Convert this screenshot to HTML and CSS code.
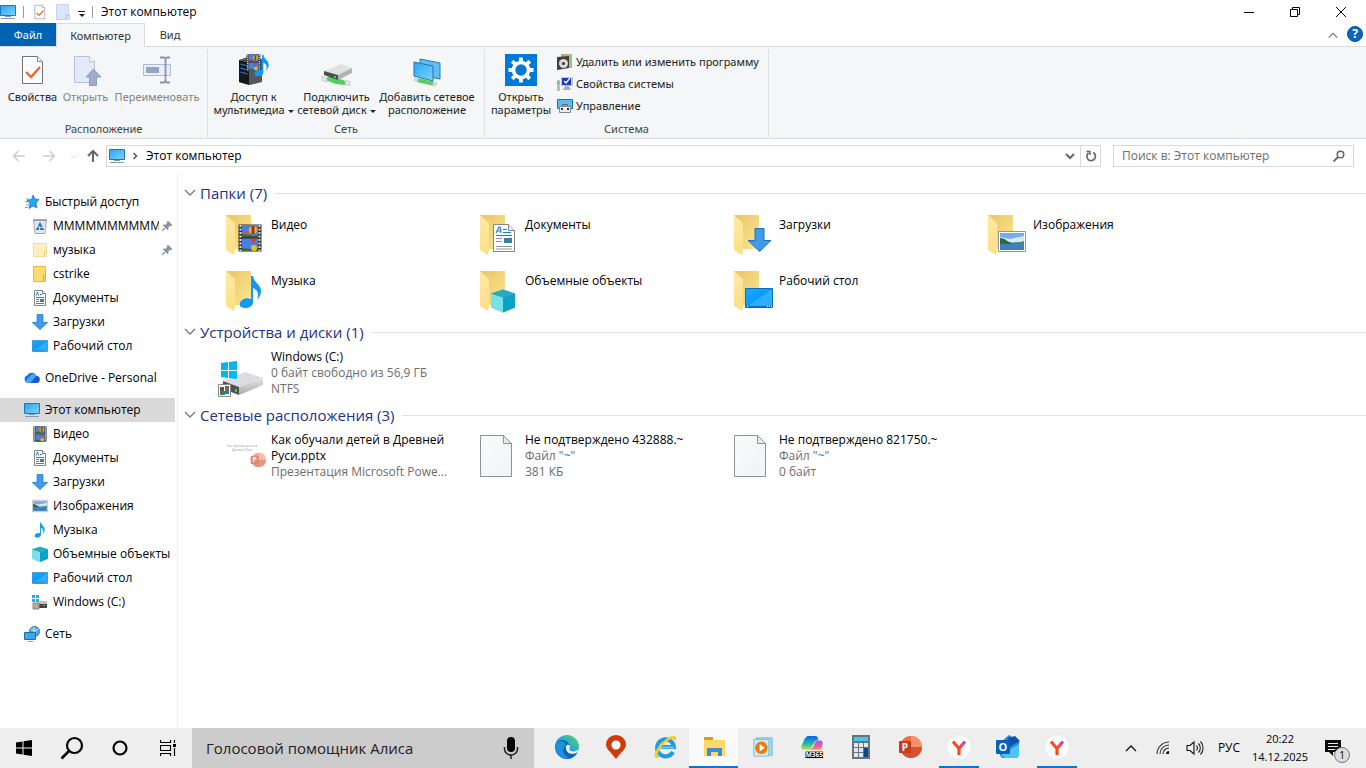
FILE: index.html
```html
<!DOCTYPE html>
<html lang="ru">
<head>
<meta charset="utf-8">
<title>Этот компьютер</title>
<link rel="stylesheet" href="styles.css">
</head>
<body>
<svg class="sprite" aria-hidden="true">
  <defs>
    <linearGradient id="gBlue" x1="0" y1="0" x2="1" y2="1"><stop offset="0" stop-color="#2aa4f4"/><stop offset="1" stop-color="#7fd4ff"/></linearGradient>
    <linearGradient id="gDesk" x1="0" y1="0" x2="1" y2="1"><stop offset="0" stop-color="#1ea7ff"/><stop offset=".5" stop-color="#0a9bfd"/><stop offset=".52" stop-color="#2bb0ff"/><stop offset="1" stop-color="#2baaf8"/></linearGradient>
    <linearGradient id="gFold" x1="0" y1="0" x2="1" y2="1"><stop offset="0" stop-color="#e9c565"/><stop offset="1" stop-color="#ffe591"/></linearGradient>
    <linearGradient id="gFront" x1="0" y1="0" x2="0" y2="1"><stop offset="0" stop-color="#ffe9a6"/><stop offset="1" stop-color="#ffdf85"/></linearGradient>
    <linearGradient id="gPaper" x1="0" y1="0" x2="1" y2="1"><stop offset="0" stop-color="#fafbfb"/><stop offset="1" stop-color="#f1f3f4"/></linearGradient>
    <linearGradient id="gDisk" x1="0" y1="0" x2="0" y2="1"><stop offset="0" stop-color="#e4e4e6"/><stop offset="1" stop-color="#a9aaad"/></linearGradient>
    <linearGradient id="gEdge" x1="0" y1="1" x2="1" y2="0"><stop offset="0" stop-color="#0c59a4"/><stop offset=".5" stop-color="#1fa5dc"/><stop offset="1" stop-color="#5fd85c"/></linearGradient>
    <linearGradient id="gY" x1="0" y1="1" x2="1" y2="0"><stop offset="0" stop-color="#ff3a1a"/><stop offset=".6" stop-color="#ff4a2a"/><stop offset="1" stop-color="#c53cf0"/></linearGradient>
    <linearGradient id="gM1" x1="0" y1="0" x2="0" y2="1"><stop offset="0" stop-color="#0a62e8"/><stop offset=".6" stop-color="#23c0a5"/><stop offset="1" stop-color="#d8e03a"/></linearGradient>
    <linearGradient id="gM2" x1="0" y1="0" x2="0" y2="1"><stop offset="0" stop-color="#a05cf5"/><stop offset=".6" stop-color="#f05a9a"/><stop offset="1" stop-color="#ff9a55"/></linearGradient>

    <symbol id="pc" viewBox="0 0 16 16"><path d="M.5 1.500h15v10h-15z" fill="url(#gBlue)" stroke="#1f78b4"/><path d="M1 14.500h14M5 12.500h6" stroke="#7d9bb3" fill="none"/></symbol>
    <symbol id="check" viewBox="0 0 26 32"><path d="M2.500 2.500h15l5 5v22h-20z" fill="#fcfcfc" stroke="#747474"/><path d="M17.500 2.500v5h5" fill="#eee" stroke="#8b8b8b"/><path d="M6 18l5 5 9-10" fill="none" stroke="#f26522" stroke-width="2.400"/></symbol>
    <symbol id="newdoc" viewBox="0 0 16 16"><path d="M1.500.5h12v9l1 1v5h-13z" fill="#dce6f6" stroke="#c5d2ea"/><path d="M11 15v-4h3" stroke="#afc0de" fill="none"/></symbol>
    <symbol id="open" viewBox="0 0 32 32"><path d="M4.500 2.500h15l5 5v21h-20z" fill="#e3eaf7" stroke="#b7c3dc"/><path d="M19.500 2.500v5h5" fill="#f5f8fd" stroke="#b7c3dc"/><path d="M23.500 15l7.500 8h-4.500v8.500h-7V23H16z" fill="#9fadc9" stroke="#8d9dbd"/></symbol>
    <symbol id="rename" viewBox="0 0 32 32"><path d="M2.500 10.500h27v11h-27z" fill="#e8eefa" stroke="#aabbdd"/><path d="M5 13h13v6H5z" fill="#94a4c4"/><path d="M19 3.500h4l1.500 1 1.500-1h3M24.500 4v23M19 28.500h4l1.500-1 1.500 1h3" fill="none" stroke="#8395b5" stroke-width="1.800"/></symbol>
    <symbol id="film" viewBox="0 0 24 28"><path d="M.5.5h23v27H.5z" fill="#333"/><path d="M2.500 1v26M21.500 1v26" stroke="#ddd" stroke-width="2" stroke-dasharray="2 1.500"/><path d="M4 1h16v12H4zM4 14.500h16V27H4z" fill="#4a80dd"/><path d="M4 10l5-1 6 3 5-1v2H4zM4 24l7 1 9-1v3H4z" fill="#356b35"/><circle cx="15" cy="6" r="4" fill="#f2b91a"/><path d="M13.500 2h3v8h-3z" fill="#8b3b21"/><circle cx="16" cy="24" r="3" fill="#edbd20"/><path d="M12 14.500h7l-3.500 5z" fill="#d83a2c"/><path d="M4 10l3-3 2 2 2-1 1 3z" fill="#d94c72"/></symbol>
    <symbol id="note" viewBox="0 0 24 34"><path d="M12 1h2c1 7 8 8 8 15 0 4-2 7-4 9 3-8-1-11-4-12v14c0 4-4 6-8 6s-6-2-5-5 5-6 11-4z" fill="#0f9bf5"/></symbol>
    <symbol id="media" viewBox="0 0 32 32"><path d="M1 6l11-4 12 3v23L12 31 1 28z" fill="#55585d"/><path d="M1 6l10 3v22L1 28z" fill="#17191c"/><path d="M2.500 10l7 2M2.500 14l7 2M2.500 18l7 2" stroke="#3477d6" stroke-width="1.300"/><svg x="8" y="0" width="15" height="17" viewBox="0 0 24 28"><use href="#film"/></svg><svg x="16" y="0" width="16" height="23"><use href="#note"/></svg></symbol>
    <symbol id="netdrive" viewBox="0 0 32 32"><path d="M3 25l6-3 13 4 5 3-3 2-9-1-8-3z" fill="#55cd5c"/><path d="M1 22.500l5 1.500v4l-5-1.500zM24 26.500l5 1v4l-5-1z" fill="#e2e6e8" stroke="#aaa" stroke-width=".5"/><path d="M3 17L20 10l11 4-14 7z" fill="#e0e1e3"/><path d="M3 17l14 4v5L3 21z" fill="#4b4d50"/><path d="M17 21l14-7v5l-14 7z" fill="#b0b1b5"/><path d="M13 22h2v2h-2z" fill="#2fe03e"/></symbol>
    <symbol id="netplace" viewBox="0 0 32 32"><path d="M9 5l20 4v16L9 21z" fill="#63bdf2" stroke="#247cb5"/><path d="M3 8l19 4v15L3 22z" fill="url(#gBlue)" stroke="#1c76b5"/><path d="M6 26l18 4" stroke="#5bcb62" stroke-width="4"/><path d="M3 25l4 1M22 29.500l4 1" stroke="#d2d8d8" stroke-width="4"/></symbol>
    <symbol id="gearbox" viewBox="0 0 32 32"><path d="M0 0h32v32H0z" fill="#0078d7"/><circle cx="16" cy="16" r="7.500" fill="none" stroke="#fff" stroke-width="3.600"/><path d="M16 3.500v5M16 23.500v5M3.500 16h5M23.500 16h5M7.200 7.200l3.500 3.500M21.300 21.300l3.500 3.500M7.200 24.800l3.500-3.500M21.300 10.700l3.500-3.500" stroke="#fff" stroke-width="3.800"/></symbol>
    <symbol id="uninstall" viewBox="0 0 16 16"><path d="M4 0h10v14H4z" fill="#c6a679"/><path d="M10 0h5v14h-5z" fill="#9bc18b"/><path d="M0 3l12-1v12L0 16z" fill="#3e3e3e"/><circle cx="6.500" cy="9.500" r="4.500" fill="#dadada"/><circle cx="6.500" cy="9.500" r="1.500" fill="#333"/></symbol>
    <symbol id="sysprop" viewBox="0 0 16 16"><path d="M0 4h3v11H0z" fill="#b9bcc0"/><path d="M0 6h2v2H0z" fill="#57c257"/><path d="M4 1h12v9H4z" fill="#c4c7cd"/><path d="M5 2h9v7H5z" fill="#1b39be"/><path d="M7 5l2 2 4-5" fill="none" stroke="#fff" stroke-width="1.300"/><path d="M8 10h4l2 4H6z" fill="#a9acb1"/></symbol>
    <symbol id="manage" viewBox="0 0 16 16"><path d="M.5 1.500h15v9H.5z" fill="#5bbcf5" stroke="#1675b4"/><path d="M2.500 8.500h11v6h-11z" fill="#eee" stroke="#888"/><path d="M5.500 8V6.500h5V8" fill="none" stroke="#666"/><path d="M4 10h2v2H4zM10 10h2v2h-2z" fill="#333"/></symbol>

    <symbol id="star" viewBox="0 0 16 16"><path d="M9 1l2 4 4 .5-3 3.500 1 5-4-2-4 2.500 1-5-3-3.500 4.500-.5z" fill="#29a4ef" stroke="#1170b8" stroke-width=".7"/><path d="M2 5h3M1 7.500h3M2 11h3M1 13.500h3" stroke="#57b5ea"/></symbol>
    <symbol id="bin" viewBox="0 0 16 16"><path d="M1.500 1.500h13l-1.500 14H3z" fill="#e3e6e9" stroke="#a5abb0"/><path d="M1 2.500h14" stroke="#959ba1"/><path d="M8 6l2.500 5h-5z" fill="none" stroke="#1d78c9" stroke-width="2" stroke-dasharray="3.500 1"/></symbol>
    <symbol id="fold1" viewBox="0 0 16 16"><path d="M1.500 1.500h13v13h-13z" fill="#fff0bd" stroke="#f1dc9d"/><path d="M12.500 14v-5h2" fill="none" stroke="#e9cf84"/></symbol>
    <symbol id="fold2" viewBox="0 0 16 16"><path d="M1.500.5h12v15h-12z" fill="#ffdc6b" stroke="#e4b93c"/><path d="M11.500 15V9.500h2" fill="none" stroke="#d8a92c"/></symbol>
    <symbol id="doc" viewBox="0 0 22 28"><path d="M.5.5h15l6 6v21H.5z" fill="#fff" stroke="#858585"/><path d="M15.500.5v6h6" fill="#eee" stroke="#858585"/><path d="M3 9l3-6h1l1 6M4.500 7h3M10 5.500h4M10 8.500h8M3 11.500h16" fill="none" stroke="#1583cc" stroke-width="1.200"/><path d="M11 14h8v5h-8z" fill="#3c7ea0"/><path d="M3 14.500h6M3 17.500h6M3 22.500h16M3 25h16" stroke="#8d969d"/></symbol>
    <symbol id="doc16" viewBox="0 0 16 16"><path d="M2.500.5h8l3 3v12h-11z" fill="#fff" stroke="#858585"/><path d="M10.500.5v3h3" fill="#eee" stroke="#858585"/><path d="M4 5.500L5.500 2l1 3.500M8 4.500h2M4 7.500h8" fill="none" stroke="#1583cc"/><path d="M4 9.500h3M4 11.500h3M4 13.500h8" stroke="#6c7a85"/><path d="M8 9h4v3H8z" fill="#3c7ea0"/></symbol>
    <symbol id="down" viewBox="0 0 24 24"><path d="M7.500.5h9v12h7L12 23.500.5 12.500h7z" fill="#3e9bea" stroke="#1d73c0"/></symbol>
    <symbol id="desk" viewBox="0 0 28 20"><path d="M.5.5h27v19H.5z" fill="url(#gDesk)" stroke="#0d6fb3"/><path d="M1 18.500h26" stroke="#0a6cb0"/><path d="M2 18.500h1M22 18.500h1M24 18.500h1M26 18.500h1" stroke="#fff"/></symbol>
    <symbol id="cloud" viewBox="0 0 16 12"><path d="M4 11a4 4 0 0 1-.5-7.800A5 5 0 0 1 12.500 4 3.500 3.500 0 0 1 12 11z" fill="#1b6fe0"/><path d="M8 2a5 5 0 0 1 4.500 2L6 11H4a4 4 0 0 1-3-1.500z" fill="#45aaf5"/><path d="M7 11l5-7a3.500 3.500 0 0 1 0 7z" fill="#1959cf"/></symbol>
    <symbol id="pic" viewBox="0 0 28 21"><path d="M.5.5h27v20H.5z" fill="#fff" stroke="#969696"/><path d="M2 2h24v17H2z" fill="#75acee"/><path d="M2 6l10 2 14-3v6H2z" fill="#d8e9f6"/><path d="M2 7c5 0 7 4 14 6H2z" fill="#2f6742"/><path d="M2 13h24v6H2z" fill="#3e81b5"/><path d="M13 13c4-2 7-1 13-3v3z" fill="#52865c"/></symbol>
    <symbol id="cube" viewBox="0 0 24 24"><path d="M0 5l12-4 12 4v14l-12 5-12-5z" fill="#45c9dd"/><path d="M0 5l12 4v15L0 19z" fill="#77e0e8"/><path d="M12 9l12-4v14l-12 5z" fill="#0aa3c6"/><path d="M0 5l12-4 12 4-12 4z" fill="#25abc1"/></symbol>
    <symbol id="drive16" viewBox="0 0 16 16"><path d="M0 1h3v3H0zM4 1h3v3H4zM0 5h3v3H0zM4 5h3v3H4z" fill="#14b4ee"/><path d="M5 9l3-2h7v6H5z" fill="#c1c2c4"/><path d="M7 10h8v4H7z" fill="#444"/><path d="M11 11h2v1h-2z" fill="#3bd046"/><path d="M1 9h6v6H1z" fill="#bba78f" stroke="#888"/></symbol>
    <symbol id="net" viewBox="0 0 16 16"><circle cx="10.500" cy="5.500" r="5" fill="#5fa6d0" stroke="#347daa"/><path d="M7 3l4 2 3-2M10 1v5" stroke="#d7edf8" fill="none"/><path d="M.5 6.500h11v7H.5z" fill="#38a9ee" stroke="#196fa8"/><path d="M4 15.500h5" stroke="#7da0b5"/></symbol>
    <symbol id="pin" viewBox="0 0 12 12"><path d="M7 1l4 4-1 1-1-.5-2 2V10L3.500 6.500 2 5h2.500l2-2L6 2z" fill="#8795a1" stroke="#8795a1" stroke-width=".7"/><path d="M4.500 7.500L1 11" stroke="#8795a1" stroke-width="1.300"/></symbol>

    <symbol id="folder" viewBox="0 0 48 48"><path d="M8 4h25v34H8z" fill="url(#gFold)"/><path d="M8 4l9 8v28l-1 4-8-5z" fill="url(#gFront)"/></symbol>
    <symbol id="f-video" viewBox="0 0 48 48"><use href="#folder"/><svg x="20" y="13" width="24" height="28"><use href="#film"/></svg></symbol>
    <symbol id="f-docs" viewBox="0 0 48 48"><use href="#folder"/><svg x="21" y="13" width="22" height="28"><use href="#doc"/></svg></symbol>
    <symbol id="f-down" viewBox="0 0 48 48"><use href="#folder"/><svg x="21" y="17" width="25" height="24"><use href="#down"/></svg></symbol>
    <symbol id="f-pic" viewBox="0 0 48 48"><use href="#folder"/><svg x="18" y="20" width="28" height="21"><use href="#pic"/></svg></symbol>
    <symbol id="f-music" viewBox="0 0 48 48"><use href="#folder"/><svg x="21" y="8" width="24" height="34"><use href="#note"/></svg></symbol>
    <symbol id="f-cube" viewBox="0 0 48 48"><use href="#folder"/><svg x="19" y="21" width="24" height="25"><use href="#cube"/></svg></symbol>
    <symbol id="f-desk" viewBox="0 0 48 48"><use href="#folder"/><svg x="19" y="21" width="28" height="20"><use href="#desk"/></svg></symbol>
    <symbol id="drive" viewBox="0 -3 48 48"><path d="M5 28l22-9 18 6-24 9z" fill="#dcdcdf"/><path d="M5 28l16 6v8L5 36z" fill="#505155"/><path d="M21 34l24-9v7l-24 10z" fill="url(#gDisk)"/><path d="M17 36h2v3h-2z" fill="#33e044"/><path d="M3 10l7-1v8H3zM11 9l8-1v9h-8zM3 18h7v7l-7-1zM11 18h8v8l-8-1z" fill="#00b8f0"/><path d="M.5 31.500h12v12H.5z" fill="#fff" stroke="#8a8a8a"/><path d="M2 34h4v4H2z" fill="#6d4d37"/><path d="M7 33h4v4H7z" fill="#8a5d3c"/><path d="M2 38h5v4H2z" fill="#348556"/><path d="M7 37h4v4H7z" fill="#2e78aa"/></symbol>
    <symbol id="blank" viewBox="0 0 48 48"><path d="M8.500 2.500h23l8 8v33h-31z" fill="url(#gPaper)" stroke="#8f9192"/><path d="M31.500 2.500v8h8z" fill="#e8e9ea" stroke="#8f9192"/></symbol>
    <symbol id="ppt" viewBox="0 0 24 24"><circle cx="13" cy="12" r="11" fill="#ed6c47"/><path d="M13 1a11 11 0 0 1 11 11H13z" fill="#ff8f6b"/><path d="M2 12h22a11 11 0 0 1-20 6z" fill="#d35230"/><rect x="1" y="6" width="12" height="12" rx="1" fill="#c43e1c"/><text x="7" y="15.500" text-anchor="middle" font-family="Open Sans, sans-serif" font-size="10" font-weight="700" fill="#fff">P</text></symbol>

    <symbol id="win" viewBox="0 0 16 16"><path d="M0 2.500l6.500-1v6H0zM7.500 1.300L16 0v7.500H7.500zM0 8.500h6.500v6L0 13.500zM7.500 8.500H16V16l-8.500-1.300z" fill="#000"/></symbol>
    <symbol id="lens" viewBox="0 0 24 24"><circle cx="14.500" cy="9.500" r="7.500" fill="none" stroke="#000" stroke-width="2.200"/><path d="M9 15l-7.500 7.500" stroke="#000" stroke-width="2.600"/></symbol>
    <symbol id="ring" viewBox="0 0 16 16"><circle cx="8" cy="8" r="6.500" fill="none" stroke="#000" stroke-width="2.200"/></symbol>
    <symbol id="tasks" viewBox="0 0 16 16"><path d="M.5 0v2.500h10V0M.5 5.500h10v5H.5zM.5 16v-2.500h10V16M14.500 0v3M14.500 8v8" fill="none" stroke="#000" stroke-width="1.200"/><path d="M13 4h3v3h-3z" fill="#000"/></symbol>
    <symbol id="mic" viewBox="0 0 16 24"><rect x="4" y="1" width="8" height="15" rx="4" fill="#000"/><path d="M1.500 11v2a6.500 6 0 0 0 13 0v-2M8 19v4" fill="none" stroke="#222" stroke-width="1.500"/></symbol>
    <symbol id="edge" viewBox="0 0 24 24"><circle cx="12" cy="12" r="12" fill="url(#gEdge)"/><path d="M1 8c5-5 12-3 13 2l-3 3c-1 4 4 6 9 4l2 1c-3 5-9 7-14 5-6-3-8-9-7-15z" fill="#0f65b5"/><path d="M11 13c-1-4 4-4 4-1-1 2-1 3 1 4 3 1 6 0 8-2l-1 3c-6 4-12 1-12-4z" fill="#eee"/><path d="M1 8c6-4 11 0 9 3-4 4-1 10 4 12-8 2-15-5-13-15z" fill="#1c91dd"/></symbol>
    <symbol id="place" viewBox="0 0 20 24"><path d="M10 24C4 16 0 14 0 9.500a10 9.500 0 0 1 20 0C20 14 16 16 10 24z" fill="#d13a0b"/><circle cx="10" cy="10" r="4.500" fill="#fff"/></symbol>
    <symbol id="ie" viewBox="0 0 24 24"><path d="M20 17a8.500 8.500 0 1 1 1-5H8" fill="none" stroke="#209be0" stroke-width="4"/><path d="M21 12.500H7" stroke="#6cc9f3" stroke-width="2"/><path d="M3 23C-3 19 13 0 21 1c3 0 2 4 1 6 0-6-8-2-13 4-4 5-6 10-2 10-1 2-3 2-4 2z" fill="#f7ca28"/></symbol>
    <symbol id="explorer" viewBox="0 0 24 22"><path d="M2 1h9v4H2z" fill="#dc9d0c"/><path d="M2 4h21v16H2z" fill="#ffd967"/><path d="M5 12h15v8h-4v-4H9v4H5z" fill="#3d8ed0"/></symbol>
    <symbol id="wmp" viewBox="0 0 24 24"><path d="M4 1h19v21H4z" fill="#a6d9ef" stroke="#6eb1cf"/><path d="M1 3h18v20H1z" fill="#c9ecfa" stroke="#78b8d4"/><circle cx="10" cy="13" r="7.500" fill="#ee7911"/><path d="M8 8.500l6 4.500-6 4.500z" fill="#fff"/></symbol>
    <symbol id="m365" viewBox="0 0 24 26"><path d="M7 1h9c2 0 2 2 3 4l-4 2-5 9H3c-3 0-3-3-2-5l3-7z" fill="url(#gM1)"/><path d="M17 6h4c3 0 3 3 2 6l-1 4H10l4-4 1-4z" fill="url(#gM2)"/><path d="M5 18h19v7H5z" fill="#050505"/><text x="14.500" y="24" text-anchor="middle" font-family="Open Sans, sans-serif" font-size="7" font-weight="700" fill="#fff">M365</text></symbol>
    <symbol id="calc" viewBox="0 0 18 24"><path d="M0 0h18v24H0z" fill="#69737c"/><path d="M2 2h14v4H2z" fill="#42c8ee"/><path d="M2 8h4v4H2zM7 8h4v4H7zM12 8h4v4h-4zM2 13h4v4H2zM7 13h4v4H7zM2 18h4v4H2zM7 18h4v4H7z" fill="#e4e7e9"/><path d="M12 13h4v9h-4z" fill="#0c4783"/></symbol>
    <symbol id="yandex" viewBox="0 0 24 24"><circle cx="12" cy="12" r="11.500" fill="#fff"/><path d="M6 6.500l6 7V20M12 13.500l6-7" fill="none" stroke="url(#gY)" stroke-width="3.200"/></symbol>
    <symbol id="outlook" viewBox="0 0 24 24"><path d="M4 8l9-8 10 6v13c0 3-2 4-4 4H8c-3 0-4-2-4-4z" fill="#1d86dc"/><path d="M12 3l7-2 5 5-11 6z" fill="#0d53a8"/><path d="M5 20l18-11v11c0 2-2 3-4 3H9z" fill="#4dc5f3"/><rect x="0" y="5" width="14" height="14" rx="1" fill="#0b60bd"/><text x="7" y="16" text-anchor="middle" font-family="Open Sans, sans-serif" font-size="11" font-weight="700" fill="#fff">O</text></symbol>
    <symbol id="up" viewBox="0 0 12 8"><path d="M1 7l5-5 5 5" fill="none" stroke="currentColor" stroke-width="1.300"/></symbol>
    <symbol id="chev" viewBox="0 0 12 8"><path d="M1 1l5 5 5-5" fill="none" stroke="currentColor" stroke-width="1.300"/></symbol>
    <symbol id="chevb" viewBox="0 0 10 8"><path d="M1 2l4 4 4-4" fill="none" stroke="currentColor" stroke-width="2"/></symbol>
    <symbol id="left" viewBox="0 0 14 12"><path d="M13 6H1.500M6.500 1l-5 5 5 5" fill="none" stroke="currentColor" stroke-width="1.500"/></symbol>
    <symbol id="right" viewBox="0 0 14 12"><path d="M1 6h11.500M7.500 1l5 5-5 5" fill="none" stroke="currentColor" stroke-width="1.500"/></symbol>
    <symbol id="arrup" viewBox="0 0 12 14"><path d="M6 13V2M1 7l5-5 5 5" fill="none" stroke="currentColor" stroke-width="2"/></symbol>
    <symbol id="crumb" viewBox="0 0 6 8"><path d="M1.500 1l3 3-3 3" fill="none" stroke="#555" stroke-width="1.500"/></symbol>
    <symbol id="refresh" viewBox="0 0 12 12"><path d="M8 2.500a4.300 4.300 0 1 1-4.500.5" fill="none" stroke="#666" stroke-width="1.700"/><path d="M1.500 1.500H5V5" fill="none" stroke="#666" stroke-width="1.500"/></symbol>
    <symbol id="find" viewBox="0 0 12 12"><circle cx="7.500" cy="4.500" r="3.300" fill="none" stroke="#666" stroke-width="1.500"/><path d="M5 7l-4.500 4.500" stroke="#666" stroke-width="1.800"/></symbol>
    <symbol id="min" viewBox="0 0 12 12"><path d="M1 6.500h10" stroke="#000"/></symbol>
    <symbol id="restore" viewBox="0 0 12 12"><path d="M1.500 3.500h7v7h-7zM3.500 3V1.500h7v7H9" fill="none" stroke="#000"/></symbol>
    <symbol id="close" viewBox="0 0 12 12"><path d="M1 1l10 10M11 1L1 11" stroke="#000"/></symbol>
    <symbol id="wifi" viewBox="0 0 16 16"><path d="M2 14A12 12 0 0 1 14 2M5 14a9 9 0 0 1 9-9M8 14a6 6 0 0 1 6-6" fill="none" stroke="#333" stroke-width="1.100"/><path d="M11 14a3 3 0 0 1 3-3v3z" fill="#111"/></symbol>
    <symbol id="sound" viewBox="0 0 18 16"><path d="M1 5.500h3l4-3.500v12l-4-3.500H1z" fill="none" stroke="#111" stroke-width="1.100"/><path d="M10.500 5.500a4 4 0 0 1 0 5M12.500 3.500a6.500 6.500 0 0 1 0 9M14.500 1.500a9.500 9.500 0 0 1 0 13" fill="none" stroke="#222" stroke-width="1.100"/></symbol>
    <symbol id="msg" viewBox="0 0 16 16"><path d="M0 0h16v12h-8v4l-4-4H0z" fill="#0c0c0c"/><path d="M3 3.500h10M3 6.500h10M3 9.500h7" stroke="#eee"/></symbol>
  </defs>
</svg>

<div class="window">
  <header class="titlebar">
    <svg class="i16"><use href="#pc"/></svg><span class="bar"></span>
    <button class="quick" aria-label="Свойства"><svg class="i16"><use href="#check"/></svg></button>
    <button class="quick" aria-label="Новая папка"><svg class="i16"><use href="#newdoc"/></svg></button>
    <button class="quick menu" aria-label="Настройка панели"><span class="over"></span><span class="tri"></span></button>
    <span class="bar"></span>
    <h1 class="title">Этот компьютер</h1>
    <div class="controls">
      <button aria-label="Свернуть"><svg class="i12"><use href="#min"/></svg></button>
      <button aria-label="Восстановить"><svg class="i12"><use href="#restore"/></svg></button>
      <button aria-label="Закрыть"><svg class="i12"><use href="#close"/></svg></button>
    </div>
  </header>

  <nav class="tabs">
    <button class="tab file">Файл</button>
    <button class="tab active">Компьютер</button>
    <button class="tab">Вид</button>
    <button class="fold" aria-label="Свернуть ленту"><svg class="chev"><use href="#up"/></svg></button>
    <button class="help" aria-label="Справка">?</button>
  </nav>

  <section class="ribbon">
    <div class="group g1">
      <div class="tools">
        <button class="tool narrow"><svg class="i32"><use href="#check"/></svg><span>Свойства</span></button>
        <button class="tool narrow" disabled><svg class="i32"><use href="#open"/></svg><span>Открыть</span></button>
        <button class="tool wide" disabled><svg class="i32"><use href="#rename"/></svg><span>Переименовать</span></button>
      </div>
      <div class="caption">Расположение</div>
    </div>
    <div class="group g2">
      <div class="tools">
        <button class="tool mid"><svg class="i32"><use href="#media"/></svg><span>Доступ к<br>мультимедиа <i class="tri"></i></span></button>
        <button class="tool mid"><svg class="i32"><use href="#netdrive"/></svg><span>Подключить<br>сетевой диск <i class="tri"></i></span></button>
        <button class="tool big"><svg class="i32"><use href="#netplace"/></svg><span>Добавить сетевое<br>расположение</span></button>
      </div>
      <div class="caption">Сеть</div>
    </div>
    <div class="group g3">
      <div class="tools">
        <button class="tool set"><svg class="i32"><use href="#gearbox"/></svg><span>Открыть<br>параметры</span></button>
        <div class="rows">
          <button class="row"><svg class="i16"><use href="#uninstall"/></svg>Удалить или изменить программу</button>
          <button class="row"><svg class="i16"><use href="#sysprop"/></svg>Свойства системы</button>
          <button class="row"><svg class="i16"><use href="#manage"/></svg>Управление</button>
        </div>
      </div>
      <div class="caption">Система</div>
    </div>
  </section>

  <div class="address">
    <button class="nav off" aria-label="Назад"><svg class="arrow"><use href="#left"/></svg></button>
    <button class="nav off" aria-label="Вперед"><svg class="arrow"><use href="#right"/></svg></button>
    <button class="nav small off" aria-label="Последние"><svg class="tiny"><use href="#chev"/></svg></button>
    <button class="nav small" aria-label="Вверх"><svg class="uparrow"><use href="#arrup"/></svg></button>
    <div class="path">
      <svg class="i16"><use href="#pc"/></svg><svg class="crumb"><use href="#crumb"/></svg>
      <a href="#here">Этот компьютер</a>
      <button class="drop" aria-label="Журнал"><svg class="chev bold"><use href="#chevb"/></svg></button>
      <button class="reload" aria-label="Обновить"><svg class="i12"><use href="#refresh"/></svg></button>
    </div>
    <label class="search"><input type="search" placeholder="Поиск в: Этот компьютер" aria-label="Поиск"><svg class="i12"><use href="#find"/></svg></label>
  </div>

  <div class="body">
    <aside class="side">
      <a class="node top" href="#q"><svg class="i16"><use href="#star"/></svg><span>Быстрый доступ</span></a>
      <a class="node" href="#q1"><svg class="i16"><use href="#bin"/></svg><span class="clip">МММММММММММ</span><svg class="pin"><use href="#pin"/></svg></a>
      <a class="node" href="#q2"><svg class="i16"><use href="#fold1"/></svg><span class="clip">музыка</span><svg class="pin"><use href="#pin"/></svg></a>
      <a class="node" href="#q3"><svg class="i16"><use href="#fold2"/></svg><span>cstrike</span></a>
      <a class="node" href="#q4"><svg class="i16"><use href="#doc16"/></svg><span>Документы</span></a>
      <a class="node" href="#q5"><svg class="i16"><use href="#down"/></svg><span>Загрузки</span></a>
      <a class="node" href="#q6"><svg class="i16"><use href="#desk"/></svg><span>Рабочий стол</span></a>
      <a class="node top gap" href="#od"><svg class="i16"><use href="#cloud"/></svg><span>OneDrive - Personal</span></a>
      <a class="node top gap on" href="#here"><svg class="i16"><use href="#pc"/></svg><span>Этот компьютер</span></a>
      <a class="node" href="#c1"><svg class="i16"><use href="#film"/></svg><span>Видео</span></a>
      <a class="node" href="#c2"><svg class="i16"><use href="#doc16"/></svg><span>Документы</span></a>
      <a class="node" href="#c3"><svg class="i16"><use href="#down"/></svg><span>Загрузки</span></a>
      <a class="node" href="#c4"><svg class="i16"><use href="#pic"/></svg><span>Изображения</span></a>
      <a class="node" href="#c5"><svg class="i16"><use href="#note"/></svg><span>Музыка</span></a>
      <a class="node" href="#c6"><svg class="i16"><use href="#cube"/></svg><span>Объемные объекты</span></a>
      <a class="node" href="#c7"><svg class="i16"><use href="#desk"/></svg><span>Рабочий стол</span></a>
      <a class="node" href="#c8"><svg class="i16"><use href="#drive16"/></svg><span>Windows (C:)</span></a>
      <a class="node top gap" href="#n"><svg class="i16"><use href="#net"/></svg><span>Сеть</span></a>
    </aside>

    <main class="content">
      <h2 class="head"><svg class="chev"><use href="#chev"/></svg>Папки (7)</h2>
      <div class="grid folders">
        <a class="item" href="#c1"><svg class="i48"><use href="#f-video"/></svg><span>Видео</span></a>
        <a class="item" href="#c2"><svg class="i48"><use href="#f-docs"/></svg><span>Документы</span></a>
        <a class="item" href="#c3"><svg class="i48"><use href="#f-down"/></svg><span>Загрузки</span></a>
        <a class="item" href="#c4"><svg class="i48"><use href="#f-pic"/></svg><span>Изображения</span></a>
        <a class="item" href="#c5"><svg class="i48"><use href="#f-music"/></svg><span>Музыка</span></a>
        <a class="item" href="#c6"><svg class="i48"><use href="#f-cube"/></svg><span>Объемные объекты</span></a>
        <a class="item" href="#c7"><svg class="i48"><use href="#f-desk"/></svg><span>Рабочий стол</span></a>
      </div>
      <h2 class="head"><svg class="chev"><use href="#chev"/></svg>Устройства и диски (1)</h2>
      <div class="grid">
        <a class="item" href="#c8"><svg class="i48"><use href="#drive"/></svg><span>Windows (C:)<small>0 байт свободно из 56,9 ГБ</small><small>NTFS</small></span></a>
      </div>
      <h2 class="head"><svg class="chev"><use href="#chev"/></svg>Сетевые расположения (3)</h2>
      <div class="grid">
        <a class="item" href="#p"><span class="thumb"><span class="slide">Как обучали детей в<br>Древней Руси</span><svg class="badge"><use href="#ppt"/></svg></span><span class="wrap">Как обучали детей в Древней Руси.pptx<small>Презентация Microsoft Powe...</small></span></a>
        <a class="item" href="#u1"><svg class="i48"><use href="#blank"/></svg><span>Не подтверждено 432888.~<small>Файл "~"</small><small>381 КБ</small></span></a>
        <a class="item" href="#u2"><svg class="i48"><use href="#blank"/></svg><span>Не подтверждено 821750.~<small>Файл "~"</small><small>0 байт</small></span></a>
      </div>
    </main>
  </div>
</div>

<footer class="taskbar">
  <button class="sys" aria-label="Пуск"><svg class="i16"><use href="#win"/></svg></button>
  <button class="sys" aria-label="Поиск"><svg class="i24"><use href="#lens"/></svg></button>
  <button class="sys" aria-label="Кортана"><svg class="i16"><use href="#ring"/></svg></button>
  <button class="sys" aria-label="Представление задач"><svg class="i16"><use href="#tasks"/></svg></button>
  <button class="alice">Голосовой помощник Алиса<svg class="i24"><use href="#mic"/></svg></button>
  <div class="apps">
    <button class="app" aria-label="Edge"><svg class="i24"><use href="#edge"/></svg></button>
    <button class="app" aria-label="Карты"><svg class="i24"><use href="#place"/></svg></button>
    <button class="app" aria-label="Internet Explorer"><svg class="i24"><use href="#ie"/></svg></button>
    <button class="app current" aria-label="Проводник"><svg class="i24"><use href="#explorer"/></svg></button>
    <button class="app" aria-label="Медиаплеер"><svg class="i20"><use href="#wmp"/></svg></button>
    <button class="app" aria-label="Microsoft 365"><svg class="i24"><use href="#m365"/></svg></button>
    <button class="app" aria-label="Калькулятор"><svg class="i24"><use href="#calc"/></svg></button>
    <button class="app" aria-label="PowerPoint"><svg class="i24"><use href="#ppt"/></svg></button>
    <button class="app running" aria-label="Яндекс"><svg class="i24"><use href="#yandex"/></svg></button>
    <button class="app" aria-label="Outlook"><svg class="i24"><use href="#outlook"/></svg></button>
    <button class="app running" aria-label="Яндекс Браузер"><svg class="i24"><use href="#yandex"/></svg></button>
  </div>
  <div class="tray">
    <button aria-label="Скрытые значки"><svg class="chev"><use href="#up"/></svg></button>
    <button aria-label="Сеть"><svg class="i16"><use href="#wifi"/></svg></button>
    <button aria-label="Громкость"><svg class="i18"><use href="#sound"/></svg></button>
    <button class="lang">РУС</button>
    <button class="clock"><span>20:22</span><span>14.12.2025</span></button>
    <button class="note" aria-label="Уведомления"><svg class="i16"><use href="#msg"/></svg><span class="count">1</span></button>
  </div>
</footer>
</body>
</html>
```
FILE: styles.css
```css
* { box-sizing: border-box; }
body {
  margin: 0;
  height: 100vh;
  display: flex;
  flex-direction: column;
  background: #fff;
  color: #000;
  font: 12px/16px "Open Sans", "Noto Sans", sans-serif;
  white-space: nowrap;
  overflow: hidden;
}
button, input { font: inherit; color: inherit; border: 0; padding: 0; margin: 0; background: none; }
button { display: flex; align-items: center; justify-content: center; }
a { color: inherit; text-decoration: none; }
svg { display: block; flex: none; }
.sprite { position: absolute; width: 0; height: 0; }
.i12 { width: 12px; height: 12px; }
.i16 { width: 16px; height: 16px; }
.i18 { width: 18px; height: 16px; }
.i20 { width: 20px; height: 22px; }
.i24 { width: 24px; height: 24px; }
.i32 { width: 32px; height: 32px; }
.i48 { width: 48px; height: 48px; margin-top: 1px; }
.chev { width: 12px; height: 8px; color: #777; }
.chev.bold { width: 10px; color: #666; }
.tri { display: inline-block; border: 3px solid transparent; border-top-color: #222; border-bottom: 0; vertical-align: middle; }

.window { flex: 1; min-height: 0; display: flex; flex-direction: column; }
.titlebar { display: flex; align-items: center; height: 23px; }
.bar { width: 1px; height: 12px; margin: 0 8px 0 7px; background: #999; }
.quick { width: 16px; margin-right: 7px; }
.quick.menu { flex-direction: column; gap: 2px; width: 7px; margin: 4px 0 0 0; }
.over { width: 7px; height: 1px; background: #222; }
.title { margin: 0; font-size: 12px; font-weight: 400; }
.controls { display: flex; margin: 0 2px 0 auto; }
.controls button { width: 46px; height: 20px; }

.tabs { display: flex; height: 24px; border-bottom: 1px solid #dadbdc; font-family: "Noto Sans", sans-serif; font-size: 11px; }
.tab { padding: 0 15px; height: 23px; color: #333; }
.tab.file { width: 56px; background: #0063b1; color: #fff; }
.tab.active { width: 89px; height: 24px; background: #f5f6f7; border: 1px solid #dadbdc; border-bottom: 0; }
.tab + .tab:not(.active) { width: 50px; }
.fold { margin-left: auto; width: 24px; }
.fold .chev { width: 10px; }
.help { width: 16px; height: 16px; margin: 3px 3px 0 2px; border-radius: 50%; background: #0a66c2; border: 1px solid #064b92; color: #fff; font-size: 12px; font-weight: 700; }

.ribbon { display: flex; height: 92px; background: #f5f6f7; border-bottom: 1px solid #dadbdc; font-family: "Noto Sans", sans-serif; font-size: 11px; }
.group { display: flex; flex-direction: column; margin: 2px 0 1px; border-right: 1px solid #e0e2e4; }
.g1 { width: 208px; }
.g2 { width: 277px; }
.g3 { width: 284px; }
.tools { display: flex; flex: 1; padding-left: 4px; }
.g1 .tools { padding-left: 6px; }
.caption { height: 16px; text-align: center; color: #444; }
.tool { flex-direction: column; justify-content: flex-start; gap: 4px; padding-top: 5px; line-height: 13px; color: #222; text-align: center; }
.tool:disabled { color: #838383; }
.narrow { width: 53px; }
.wide { width: 90px; }
.mid { width: 83px; }
.big { width: 98px; }
.set { width: 64px; }
.rows { padding: 2px 0 0 4px; }
.row { height: 22px; gap: 3px; color: #222; }

.address { display: flex; align-items: center; height: 34px; padding: 0 12px 0 4px; }
.nav { width: 30px; height: 22px; color: #666; }
.nav.small { width: 19px; }
.nav.off { color: #ccc; }
.arrow { width: 14px; height: 12px; }
.uparrow { width: 12px; height: 14px; }
.tiny { width: 8px; height: 5px; }
.path { flex: 1; display: flex; align-items: center; height: 22px; margin-left: 4px; padding-left: 2px; border: 1px solid #d9d9d9; }
.path a { flex: 1; }
.crumb { width: 6px; height: 8px; margin: 0 8px 0 7px; }
.drop { width: 20px; height: 20px; }
.reload { width: 20px; height: 20px; border-left: 1px solid #d9d9d9; }
.search { display: flex; align-items: center; width: 241px; height: 22px; margin-left: 12px; padding: 0 8px; border: 1px solid #d9d9d9; }
.search input { flex: 1; min-width: 0; outline: 0; }
.search input::placeholder { color: #6d6d6d; opacity: 1; }

.body { flex: 1; min-height: 0; display: flex; }
.side { width: 178px; padding: 17px 2px 0 0; border-right: 1px solid #f0f0f0; }
.node { display: flex; align-items: center; gap: 5px; height: 24px; padding-left: 32px; }
.node.top { padding-left: 24px; }
.node.gap { margin-top: 8px; }
.on { background: #d9d9d9; }
.clip { width: 106px; overflow: hidden; }
.pin { width: 12px; height: 12px; margin-left: -3px; }

.content { flex: 1; padding: 10px 0 0 6px; }
.head { display: flex; align-items: center; gap: 4px; height: 20px; margin: 0 0 3px; font-size: 15px; line-height: 20px; font-weight: 400; color: #1e3287; }
.head::after { content: ""; flex: 1; height: 1px; margin-left: 3px; background: #e2e2e2; }
.grid { display: grid; grid-template-columns: repeat(auto-fill, 254px); grid-auto-rows: 56px; padding-left: 34px; margin-bottom: 4px; }
.item { display: flex; gap: 5px; padding-top: 4px; }
.folders .item > span { padding-top: 7px; }
.item small { display: block; font-size: 12px; color: #6d6d6d; }
.wrap { width: 180px; white-space: normal; }
.thumb { display: flex; flex: none; flex-direction: column; justify-content: center; width: 48px; height: 48px; color: #999; }
.slide { font-size: 3px; line-height: 4px; text-align: center; }
.badge { align-self: flex-end; width: 16px; height: 16px; opacity: .6; }

.taskbar { display: flex; height: 40px; background: #eee; }
.sys { width: 48px; }
.alice { width: 342px; justify-content: space-between; padding: 0 11px 0 14px; background: #ccc; color: #222; font-size: 15px; }
.apps { display: flex; margin-left: 8px; }
.app { width: 49px; border-bottom: 2px solid transparent; }
.current { background: #fafafa; border-bottom-color: #0078d7; }
.running { background: linear-gradient(#0078d7, #0078d7) center bottom / 40px 2px no-repeat border-box; }
.tray { display: flex; margin-left: auto; }
.tray button { width: 32px; }
.tray .chev { color: #111; }
.tray .lang { width: 36px; }
.tray .clock { flex-direction: column; width: 66px; line-height: 18px; font-size: 11px; }
.tray .note { position: relative; width: 53px; padding-right: 14px; }
.count { position: absolute; left: 21px; top: 19px; width: 16px; height: 16px; border: 1px solid #777; border-radius: 50%; background: #ddd; font-size: 10px; line-height: 14px; }
```
